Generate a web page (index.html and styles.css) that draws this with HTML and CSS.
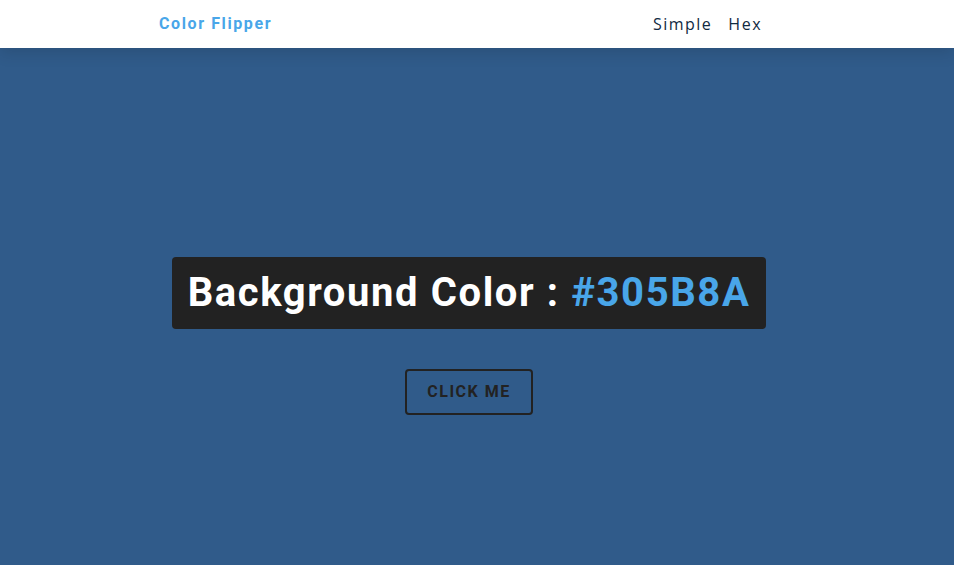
FILE: index.html
```
<!DOCTYPE html>
<html lang="en">
<head>
<meta charset="UTF-8">
<title>Color Flipper</title>
<link rel="stylesheet" href="styles.css">
</head>
<body>
<nav class="nav">
  <div class="nav-center">
    <h4 class="logo">Color Flipper</h4>
    <ul class="nav-links">
      <li><a href="#">Simple</a></li>
      <li><a href="#">Hex</a></li>
    </ul>
  </div>
</nav>
<main class="main">
  <div class="container">
    <h2 class="title">Background Color : <span class="color">#305B8A</span></h2>
    <button class="btn-hero">Click me</button>
  </div>
</main>
</body>
</html>
```
FILE: styles.css
```
* { margin: 0; padding: 0; box-sizing: border-box; }
html, body { height: 100%; }
body {
  background: #305b8a;
  font-family: "Open Sans", sans-serif;
  color: #102a42;
}
.nav {
  position: relative;
  z-index: 2;
  height: 48px;
  background: #fff;
  box-shadow: 0 5px 15px rgba(0, 0, 0, 0.12);
}
.nav-center {
  height: 100%;
  display: flex;
  align-items: center;
  justify-content: space-between;
  padding: 0 192px 0 159px;
}
.logo {
  font-family: Roboto, sans-serif;
  font-weight: 700;
  font-size: 16px;
  letter-spacing: 1.6px;
  color: #49a6e9;
  margin-top: -2px;
}
.nav-links {
  list-style: none;
  display: flex;
  gap: 16px;
}
.nav-links a {
  text-decoration: none;
  color: #102a42;
  font-size: 16px;
  letter-spacing: 1.5px;
}
.main {
  min-height: calc(100vh - 48px);
  display: flex;
  align-items: center;
  justify-content: center;
  padding: 58px 16px 0 0;
}
.container { text-align: center; }
.title {
  display: inline-block;
  background: #222;
  color: #fff;
  font-family: Roboto, sans-serif;
  font-weight: 700;
  font-size: 40px;
  line-height: 40px;
  letter-spacing: 1.6px;
  padding: 16px;
  border-radius: 4px;
  margin-bottom: 40px;
}
.color { color: #49a6e9; }
.btn-hero {
  display: block;
  margin: 0 auto;
  font-family: Roboto, sans-serif;
  font-weight: 700;
  text-transform: uppercase;
  background: transparent;
  color: #222;
  font-size: 16px;
  line-height: 18px;
  letter-spacing: 1.5px;
  border: 2px solid #222;
  padding: 12px 20px;
  border-radius: 4px;
}
```
